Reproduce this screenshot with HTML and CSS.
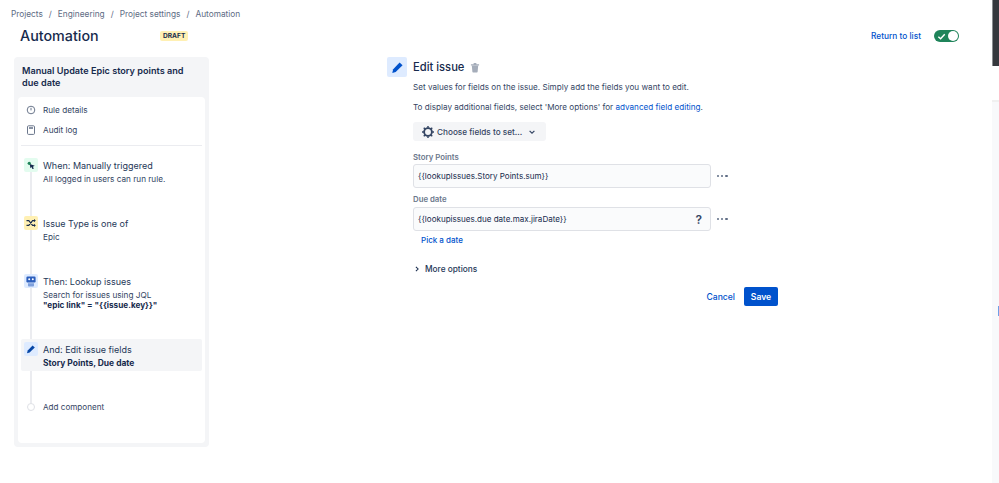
FILE: index.html
```html
<!DOCTYPE html>
<html lang="en">
<head>
  <meta charset="UTF-8" />
  <meta name="viewport" content="width=device-width, initial-scale=1.0"/>
  <title>Automation</title>
  <link rel="stylesheet" href="styles.css">
</head>
<body>

  <div class="page">
    <nav class="crumbs">
      <span>Projects</span><i>/</i><span>Engineering</span><i>/</i><span>Project settings</span><i>/</i><span>Automation</span>
    </nav>

    <header class="top">
      <h1>Automation</h1>
      <span class="lozenge">DRAFT</span>
      <a class="return" href="#">Return to list</a>
      <div class="toggle">
        <svg width="9" height="9" viewBox="0 0 10 10"><path d="M1.5 5.2 4 7.6 8.6 2.6" fill="none" stroke="#fff" stroke-width="1.6"/></svg>
        <span class="knob"></span>
      </div>
    </header>

    <div class="main">
      <aside class="rule">
        <h2>Manual Update Epic story points and due date</h2>
        <div class="rule-body">
          <div class="link-row">
            <svg class="link-icon" width="10" height="10" viewBox="0 0 10 10"><circle cx="5" cy="5" r="3.8" fill="none" stroke="#6b778c" stroke-width="1"/><path d="M5 2.8v2.6" stroke="#6b778c" stroke-width="1"/></svg>
            <span>Rule details</span>
          </div>
          <div class="link-row">
            <svg class="link-icon" width="10" height="10" viewBox="0 0 10 10"><rect x="1.5" y="0.8" width="7" height="8.6" rx="1" fill="none" stroke="#6b778c" stroke-width="1"/><path d="M3 2.2h4v1.6H3z" fill="#6b778c"/></svg>
            <span>Audit log</span>
          </div>
          <hr>

          <div class="steps">
            <div class="step step-when">
              <div class="step-icon green">
                <svg width="9" height="9" viewBox="0 0 10 10"><circle cx="2.5" cy="2.6" r="1.8" fill="#1f845a"/><path d="M3 3.2 8.6 5.4 6.6 6.4 7.6 8.6 6 8.8 5 6.8 3.8 8z" fill="#172b4d"/></svg>
              </div>
              <div class="step-text">
                <div class="step-title">When: Manually triggered</div>
                <div class="step-sub">All logged in users can run rule.</div>
              </div>
            </div>

            <div class="step step-if">
              <div class="step-icon yellow">
                <svg width="10" height="10" viewBox="0 0 10 10"><path d="M0.5 2.6H2.8L6.6 7.4H8.6M0.5 7.4H2.8L6.6 2.6H8.6" fill="none" stroke="#172b4d" stroke-width="1.1"/><path d="M8 1 9.8 2.6 8 4.2zM8 5.8 9.8 7.4 8 9z" fill="#172b4d"/></svg>
              </div>
              <div class="step-text">
                <div class="step-title">Issue Type is one of</div>
                <div class="step-sub">Epic</div>
              </div>
            </div>

            <div class="step step-then">
              <div class="step-icon blue">
                <svg width="10" height="11" viewBox="0 0 10 11"><path d="M1.6 0.6h6.8a1.2 1.2 0 0 1 1.2 1.2v3.4a1.2 1.2 0 0 1-1.2 1.2H1.6A1.2 1.2 0 0 1 .4 5.2V1.8A1.2 1.2 0 0 1 1.6.6z" fill="#2c5fbd"/><circle cx="3.2" cy="3.2" r="1" fill="#fff"/><circle cx="6.8" cy="3.2" r="1" fill="#fff"/><path d="M2 7.2h6v2.6a.8.8 0 0 1-.8.8H2.8a.8.8 0 0 1-.8-.8z" fill="#7d9fdc"/></svg>
              </div>
              <div class="step-text">
                <div class="step-title">Then: Lookup issues</div>
                <div class="step-sub">Search for issues using JQL</div>
                <div class="step-sub bold">"epic link" = "{{issue.key}}"</div>
              </div>
            </div>

            <div class="step step-and">
              <div class="step-icon blue">
                <svg width="10" height="10" viewBox="0 0 10 10"><path d="M6.6 1.4 8.8 3.4 3.6 8.4 1 9.2 1.7 6.4z" fill="#0747a6"/></svg>
              </div>
              <div class="step-text">
                <div class="step-title">And: Edit issue fields</div>
                <div class="step-sub bold">Story Points, Due date</div>
              </div>
            </div>

            <div class="step step-add">
              <div class="step-dot"></div>
              <div class="step-add-text">Add component</div>
            </div>
          </div>
        </div>
      </aside>

      <section class="editor">
        <div class="editor-head">
          <div class="editor-icon">
            <svg width="13" height="13" viewBox="0 0 10 10"><path d="M6.6 1.2 8.9 3.3 3.6 8.4 1 9.2 1.7 6.4z" fill="#0052cc"/></svg>
          </div>
          <h3>Edit issue</h3>
          <svg class="trash" width="10" height="11" viewBox="0 0 11 11"><path d="M1 2h9v1.2H1zM4 .6h3V2H4zM2 3.6h7l-.6 6.6a.8.8 0 0 1-.8.7H3.4a.8.8 0 0 1-.8-.7z" fill="#a5adba"/></svg>
        </div>

        <div class="editor-body">
          <p>Set values for fields on the issue. Simply add the fields you want to edit.</p>
          <p>To display additional fields, select 'More options' for <a href="#">advanced field editing</a>.</p>

          <button class="choose">
            <svg width="12" height="12" viewBox="0 0 13 13"><circle cx="6.5" cy="6.5" r="4.2" fill="none" stroke="#344563" stroke-width="2"/><path d="M6.5 0v2M6.5 11v2M0 6.5h2M11 6.5h2M1.9 1.9l1.4 1.4M9.7 9.7l1.4 1.4M1.9 11.1l1.4-1.4M9.7 3.3l1.4-1.4" stroke="#344563" stroke-width="1.6"/></svg>
            <span>Choose fields to set...</span>
            <svg width="8" height="8" viewBox="0 0 8 8"><path d="M1.6 2.8 4 5.2 6.4 2.8" fill="none" stroke="#344563" stroke-width="1.2"/></svg>
          </button>

          <label class="field-label">Story Points</label>
          <div class="field-row">
            <div class="field">{{lookupIssues.Story Points.sum}}</div>
            <div class="dots"><b></b><b></b><b></b></div>
          </div>

          <label class="field-label second">Due date</label>
          <div class="field-row">
            <div class="field">{{lookupissues.due date.max.jiraDate}}<span class="help">?</span></div>
            <div class="dots"><b></b><b></b><b></b></div>
          </div>
          <a class="pick" href="#">Pick a date</a>

          <div class="more">
            <svg width="6" height="6" viewBox="0 0 7 7"><path d="M2.2 1 4.8 3.5 2.2 6" fill="none" stroke="#172b4d" stroke-width="1.2"/></svg>
            <span>More options</span>
          </div>

          <div class="actions">
            <a href="#">Cancel</a>
            <button class="save">Save</button>
          </div>
        </div>
      </section>
    </div>
  </div>

  <div class="edge">
    <div class="edge-dark"></div>
    <div class="edge-light"><span class="edge-mark"></span></div>
  </div>

</body>
</html>
```

FILE: styles.css
```css
* {
  box-sizing: border-box;
}

html, body {
  height: 100%;
}

body {
  margin: 0;
  display: flex;
  font-family: 'Inter', 'Liberation Sans', sans-serif;
  background-color: #fff;
  color: #172b4d;
  overflow: hidden;
}

.page {
  flex: 1;
  min-width: 0;
  padding: 8px 0 0 11px;
}

.crumbs {
  display: flex;
  gap: 6px;
  font-size: 8.3px;
  line-height: 12px;
  color: #5e6c84;
}

.crumbs i {
  font-style: normal;
}

.top {
  display: flex;
  align-items: center;
  height: 30px;
  margin-top: 1px;
  padding-left: 9px;
}

.top h1 {
  margin: 0;
  width: 140px;
  font-size: 14.3px;
  font-weight: 500;
  line-height: 30px;
}

.lozenge {
  background-color: #fff0b3;
  border-radius: 2px;
  padding: 0 3px;
  font-size: 6.6px;
  font-weight: 700;
  line-height: 10px;
}

.return {
  margin-left: auto;
  font-size: 8.3px;
  font-weight: 500;
  color: #0052cc;
  text-decoration: none;
}

.toggle {
  display: flex;
  align-items: center;
  justify-content: space-between;
  width: 25px;
  height: 12px;
  margin: 0 33px 0 13px;
  padding: 0 1px 0 3px;
  border-radius: 6px;
  background-color: #1f845a;
}

.knob {
  width: 10px;
  height: 10px;
  border-radius: 50%;
  background-color: #fff;
}

.main {
  display: flex;
  margin-top: 6px;
  padding-left: 3px;
}

.rule {
  width: 195px;
  height: 390px;
  flex-shrink: 0;
  padding: 8px 4px 4px;
  border-radius: 4px;
  background-color: #f4f5f7;
}

.rule h2 {
  margin: 0 4px;
  font-size: 9.15px;
  font-weight: 600;
  line-height: 12px;
}

.rule-body {
  height: 346px;
  margin-top: 8px;
  padding: 3px 3px 0;
  border-radius: 4px;
  background-color: #fff;
}

.link-row {
  display: flex;
  align-items: center;
  height: 20px;
  padding-left: 5px;
  font-size: 8.2px;
  color: #344563;
}

.link-row span {
  margin-left: 7px;
}

.rule-body hr {
  height: 1px;
  margin: 5px 0 0;
  border: 0;
  background-color: #ebecf0;
}

.steps {
  position: relative;
  margin-top: 12px;
}

.steps::before {
  content: "";
  position: absolute;
  left: 9px;
  top: 14px;
  bottom: 8px;
  width: 2px;
  background-color: #ebecf0;
}

.step {
  position: relative;
  display: flex;
  gap: 5px;
  padding-left: 3px;
}

.step-when,
.step-if {
  height: 58px;
}

.step-then {
  height: 65px;
}

.step-and {
  height: 32px;
  padding-top: 3px;
  border-radius: 2px;
  background-color: #f4f5f7;
}

.step-and .step-sub {
  font-size: 8.45px;
}

.step-add {
  align-items: center;
  height: 14px;
  margin-top: 29px;
  gap: 8px;
  padding-left: 6px;
}

.step-icon {
  display: flex;
  align-items: center;
  justify-content: center;
  width: 14px;
  height: 14px;
  border-radius: 2px;
  flex-shrink: 0;
}

.step-icon.green {
  background-color: #e3fcef;
}

.step-icon.yellow {
  background-color: #fff0b3;
}

.step-icon.blue {
  background-color: #deebff;
}

.step-text {
  padding-top: 1px;
}

.step-title {
  font-size: 9px;
  line-height: 14px;
  color: #253858;
}

.step-sub {
  margin-top: 1px;
  font-size: 8.2px;
  line-height: 10px;
  color: #344563;
}

.step-sub.bold {
  font-weight: 700;
  color: #172b4d;
}

.step-sub + .step-sub {
  margin-top: 0;
}

.step-dot {
  width: 8px;
  height: 8px;
  border: 1.5px solid #dfe1e6;
  border-radius: 50%;
  background-color: #fff;
}

.step-add-text {
  font-size: 8.1px;
  color: #344563;
}

.editor {
  margin-left: 178px;
  width: 391px;
}

.editor-head {
  display: flex;
  align-items: center;
  height: 20px;
}

.editor-icon {
  display: flex;
  align-items: center;
  justify-content: center;
  width: 20px;
  height: 20px;
  border-radius: 2px;
  background-color: #deebff;
}

.editor-head h3 {
  margin: 0 0 0 6px;
  font-size: 11.2px;
  font-weight: 500;
}

.trash {
  margin-left: 6px;
}

.editor-body {
  padding-left: 26px;
}

.editor-body p {
  margin: 10px 0 0;
  font-size: 8.15px;
  line-height: 10px;
  color: #344563;
}

.editor-body p:first-child {
  margin-top: 5px;
}

.editor-body a {
  color: #0052cc;
  text-decoration: none;
}

.choose {
  display: flex;
  align-items: center;
  gap: 3px;
  height: 19px;
  margin-top: 10px;
  padding: 0 10px 0 9px;
  border: 0;
  border-radius: 3px;
  background-color: #f4f5f7;
  color: #344563;
  font-family: inherit;
  font-size: 8.2px;
  font-weight: 500;
}

.choose svg:last-child {
  margin-left: 3px;
}

.field-label {
  display: block;
  margin-top: 11px;
  font-size: 7.8px;
  font-weight: 600;
  line-height: 10px;
  color: #6b778c;
}

.field-label.second {
  margin-top: 6px;
}

.field-row {
  display: flex;
  align-items: center;
  margin-top: 2px;
}

.field-label.second + .field-row {
  margin-top: 3px;
}

.field {
  display: flex;
  align-items: center;
  justify-content: space-between;
  width: 298px;
  height: 24px;
  padding: 0 8px 0 4px;
  border: 1.5px solid #dfe1e6;
  border-radius: 3px;
  background-color: #fafbfc;
  font-size: 8.05px;
  color: #172b4d;
}

.help {
  font-size: 12px;
  font-weight: 600;
  color: #344563;
}

.dots {
  display: flex;
  gap: 2px;
  margin-left: 6px;
}

.dots b {
  width: 2.2px;
  height: 2.2px;
  border-radius: 50%;
  background-color: #5e6c84;
}

.pick {
  display: block;
  margin: 2px 0 0 8px;
  font-size: 8px;
  font-weight: 500;
  line-height: 14px;
}

.more {
  display: flex;
  align-items: center;
  gap: 5px;
  margin-top: 16px;
  padding-left: 1px;
  font-size: 8.3px;
  font-weight: 500;
  line-height: 12px;
  color: #253858;
}

.actions {
  display: flex;
  align-items: center;
  justify-content: flex-end;
  gap: 9px;
  width: 365px;
  margin-top: 12px;
  font-size: 8.6px;
  font-weight: 500;
}

.save {
  width: 34px;
  height: 19px;
  border: 0;
  border-radius: 2px;
  background-color: #0052cc;
  color: #fff;
  font-family: inherit;
  font-size: 8.6px;
  font-weight: 600;
}

.edge {
  display: flex;
  flex-direction: column;
  width: 7px;
  flex-shrink: 0;
}

.edge-dark {
  height: 66px;
  border-left: 1px solid #8a8d90;
  background-color: #36393e;
}

.edge-light {
  flex: 1;
  margin-top: 34px;
  padding-top: 204px;
  border-top: 2px solid #f0f0f0;
  background-color: #f8f9fb;
}

.edge-mark {
  display: block;
  width: 1px;
  height: 10px;
  margin-left: auto;
  background-color: #6f9fe8;
}
```
